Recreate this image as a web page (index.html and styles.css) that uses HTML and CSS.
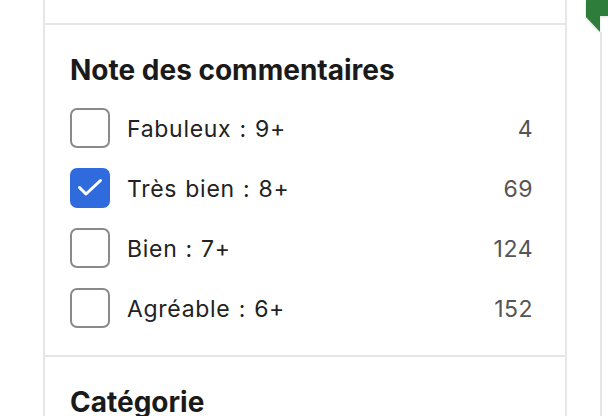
FILE: index.html
```html
<!DOCTYPE html>
<html lang="fr">
<head>
<meta charset="utf-8">
<link rel="stylesheet" href="styles.css">
</head>
<body>
<div class="page">
  <aside class="panel">
    <div class="section section-top"></div>
    <section class="section">
      <h2 class="title">Note des commentaires</h2>
      <ul class="options">
        <li class="option"><span class="box"></span><span class="label">Fabuleux : 9+</span><span class="count">4</span></li>
        <li class="option"><span class="box checked"><svg viewBox="0 0 40 40" width="40" height="40"><path d="M9.5 19.5 L16 26 L30.5 12.5" fill="none" stroke="#fff" stroke-width="3" stroke-linecap="round" stroke-linejoin="round"/></svg></span><span class="label">Très bien : 8+</span><span class="count">69</span></li>
        <li class="option"><span class="box"></span><span class="label">Bien : 7+</span><span class="count">124</span></li>
        <li class="option"><span class="box"></span><span class="label">Agréable : 6+</span><span class="count">152</span></li>
      </ul>
    </section>
    <section class="section">
      <h2 class="title">Catégorie</h2>
    </section>
  </aside>
  <div class="side"></div>
</div>
<svg class="ribbon" width="24" height="34" viewBox="0 0 24 34">
  <defs>
    <filter id="sh" x="-50%" y="-50%" width="200%" height="200%">
      <feGaussianBlur stdDeviation="1.5"/>
    </filter>
  </defs>
  <path d="M0 1 L24 1 L24 17 L15 17 L15 33 L0 18 Z" fill="#000" opacity="0.12" filter="url(#sh)"/>
  <path d="M1 0 L23 0 L23 16 L15 16 L15 32 L1 17 Z" fill="#2f7d3a"/>
</svg>
</body>
</html>
```
FILE: styles.css
```css
html, body {
  margin: 0;
  padding: 0;
  background: #fff;
  font-family: Inter, "Noto Sans", "Liberation Sans", sans-serif;
  color: #1a1a1a;
  overflow: hidden;
}
.page {
  display: flex;
  height: 416px;
}
.panel {
  margin-left: 43px;
  width: 520px;
  border-left: 2px solid #e6e6e6;
  border-right: 2px solid #e6e6e6;
  flex: none;
}
.side {
  margin-left: 33px;
  margin-top: 32px;
  border-left: 2px solid #e6e6e6;
  flex: 1;
}
.section {
  border-bottom: 2px solid #e6e6e6;
  padding: 0 33px 0 25px;
}
.section-top {
  height: 23px;
}
.title {
  margin: 0;
  padding-top: 28px;
  font-size: 28px;
  line-height: 34px;
  font-weight: 700;
  color: #1a1a1a;
  letter-spacing: 0;
}
.options {
  list-style: none;
  margin: 21px 0 0;
  padding: 0 0 27px;
}
.option {
  display: flex;
  align-items: center;
  height: 40px;
  margin-bottom: 20px;
}
.option:last-child {
  margin-bottom: 0;
}
.box {
  width: 36px;
  height: 36px;
  border: 2px solid #8a8a8a;
  border-radius: 7px;
  flex: none;
  position: relative;
}
.box.checked {
  background: #2f6bdd;
  border-color: #2f6bdd;
}
.box svg {
  position: absolute;
  left: -2px;
  top: -2px;
}
.label {
  margin-left: 17px;
  font-size: 23px;
  line-height: 28px;
  letter-spacing: 0.7px;
  word-spacing: 1px;
  color: #222;
  flex: 1;
  padding-top: 1px;
}
.count {
  font-size: 23px;
  line-height: 28px;
  letter-spacing: 0.5px;
  color: #555;
  margin-right: -1px;
  padding-top: 1px;
}
.ribbon {
  position: absolute;
  top: 0;
  left: 585px;
}
```
